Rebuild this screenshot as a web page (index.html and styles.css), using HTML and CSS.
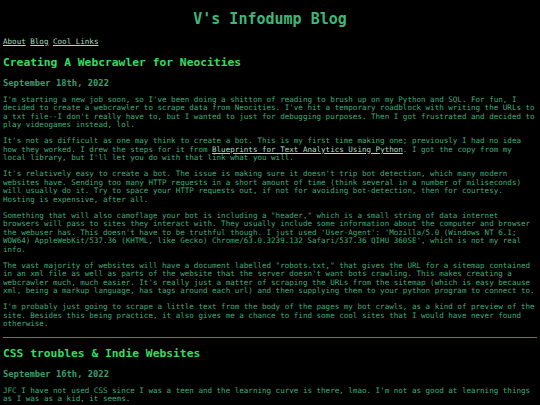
FILE: index.html
```html
<!DOCTYPE html>
<html lang="en">
<head>
<meta charset="utf-8">
<title>V's Infodump Blog</title>
<link rel="stylesheet" href="styles.css">
</head>
<body class="page">
<header class="site-header">
  <h1 class="site-title">V's Infodump Blog</h1>
  <nav class="nav"><a href="#">About</a> <a href="#">Blog</a> <a href="#">Cool Links</a></nav>
</header>
<main>
  <article class="post">
    <h2 class="post-title">Creating A Webcrawler for Neocities</h2>
    <h3 class="post-date">September 18th, 2022</h3>
    <p class="post-text">I'm starting a new job soon, so I've been doing a shitton of reading to brush up on my Python and SQL. For fun, I decided to create a webcrawler to scrape data from Neocities. I've hit a temporary roadblock with writing the URLs to a txt file--I don't really have to, but I wanted to just for debugging purposes. Then I got frustrated and decided to play videogames instead, lol.</p>
    <p class="post-text">It's not as difficult as one may think to create a bot. This is my first time making one; previously I had no idea how they worked. I drew the steps for it from <a href="#">Blueprints for Text Analytics Using Python</a>. I got the copy from my local library, but I'll let you do with that link what you will.</p>
    <p class="post-text">It's relatively easy to create a bot. The issue is making sure it doesn't trip bot detection, which many modern websites have. Sending too many HTTP requests in a short amount of time (think several in a number of miliseconds) will usually do it. Try to space your HTTP requests out, if not for avoiding bot-detection, then for courtesy. Hosting is expensive, after all.</p>
    <p class="post-text">Something that will also camoflage your bot is including a "header," which is a small string of data internet browsers will pass to sites they interact with. They usually include some information about the computer and browser the webuser has. This doesn't have to be truthful though. I just used 'User-Agent': 'Mozilla/5.0 (Windows NT 6.1; WOW64) AppleWebKit/537.36 (KHTML, like Gecko) Chrome/63.0.3239.132 Safari/537.36 QIHU 360SE', which is not my real info.</p>
    <p class="post-text">The vast majority of websites will have a document labelled "robots.txt," that gives the URL for a sitemap contained in an xml file as well as parts of the website that the server doesn't want bots crawling. This makes creating a webcrawler much, much easier. It's really just a matter of scraping the URLs from the sitemap (which is easy because xml, being a markup language, has tags around each url) and then supplying them to your python program to connect to.</p>
    <p class="post-text">I'm probably just going to scrape a little text from the body of the pages my bot crawls, as a kind of preview of the site. Besides this being practice, it also gives me a chance to find some cool sites that I would have never found otherwise.</p>
  </article>
  <hr class="divider">
  <article class="post">
    <h2 class="post-title">CSS troubles &amp; Indie Websites</h2>
    <h3 class="post-date">September 16th, 2022</h3>
    <p class="post-text">JFC I have not used CSS since I was a teen and the learning curve is there, lmao. I'm not as good at learning things as I was as a kid, it seems.</p>
  </article>
</main>
</body>
</html>
```
FILE: styles.css
```css
html { background: #000; }
.page {
  margin: 3px;
  background: #000;
  color: #3fae78;
  font-family: "DejaVu Sans Mono", "Liberation Mono", monospace;
  font-size: 7.55px;
  line-height: 8.5px;
}
.site-title {
  font-size: 15px;
  line-height: 17px;
  margin: 8px 0 10px;
  text-align: center;
  color: #3cb878;
  font-weight: bold;
}
.nav a, .post-text a {
  color: #a8dcc0;
  text-decoration: underline;
}
.post-title {
  font-size: 11.3px;
  line-height: 13px;
  margin: 9px 0;
  color: #33dd62;
  font-weight: bold;
}
.post-date {
  font-size: 8.8px;
  line-height: 10px;
  margin: 8px 0;
  color: #3a9e6c;
  font-weight: bold;
}
.post-text {
  margin: 7.6px 0;
}
.divider {
  border: none;
  border-top: 1px solid #3a8f62;
  margin: 4px 0;
}
```
